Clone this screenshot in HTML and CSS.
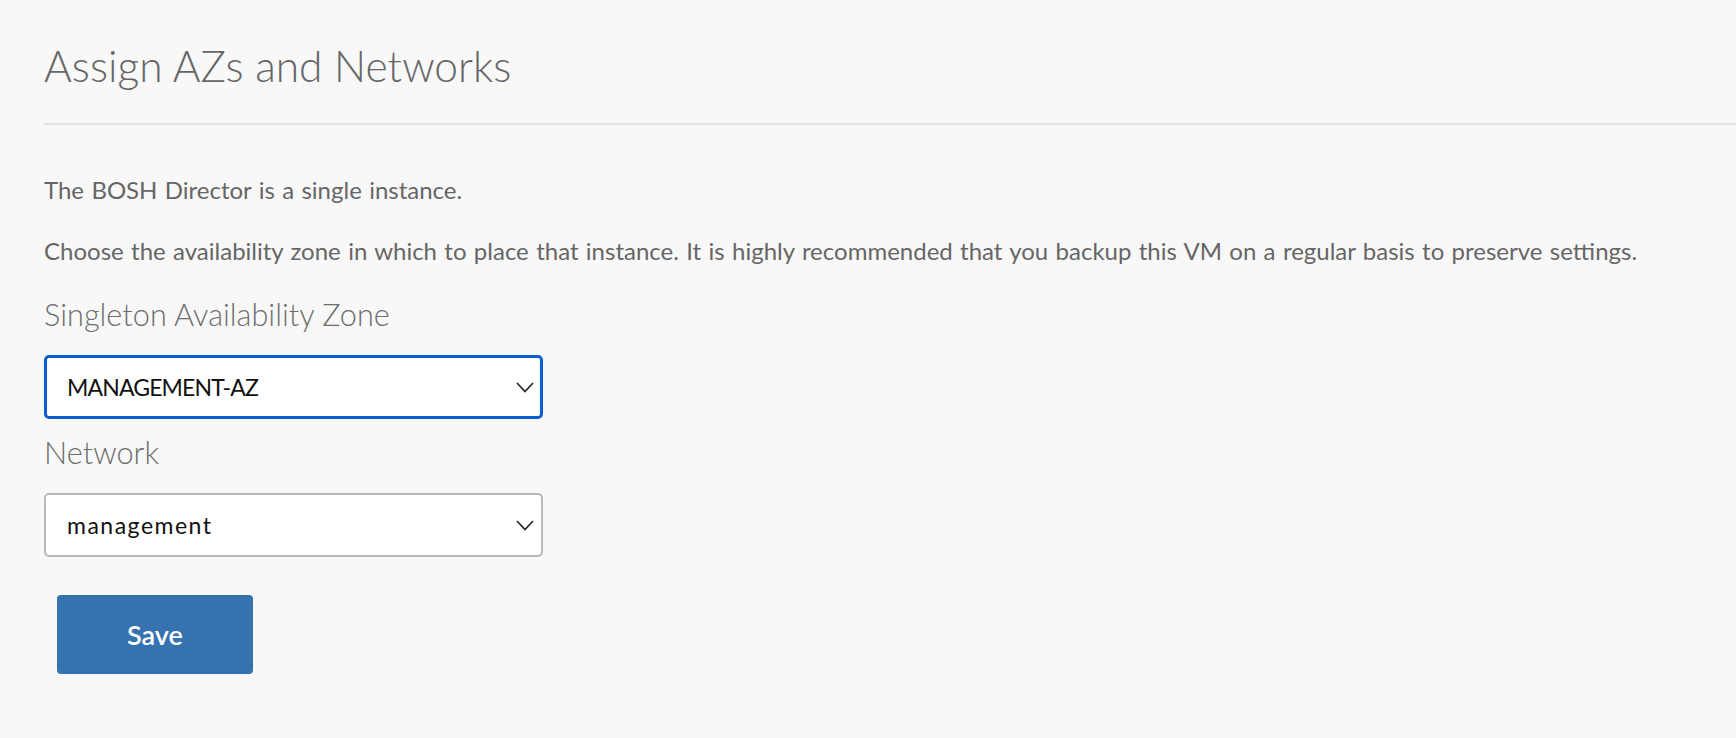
FILE: index.html
```html
<!DOCTYPE html>
<html lang="en">
<head>
<meta charset="utf-8">
<title>Assign AZs and Networks</title>
<link rel="stylesheet" href="styles.css">
</head>
<body>
<main class="page">
  <header class="page-header">
    <h1 class="title">Assign AZs and Networks</h1>
  </header>
  <section class="content">
    <p class="desc">The BOSH Director is a single instance.</p>
    <p class="desc">Choose the availability zone in which to place that instance. It is highly recommended that you backup this VM on a regular basis to preserve settings.</p>
    <div class="field">
      <label class="field-label">Singleton Availability Zone</label>
      <div class="select select-focused">
        <span class="select-value select-value-caps">MANAGEMENT-AZ</span>
        <svg class="chevron" width="18" height="11" viewBox="0 0 18 11"><path d="M1 1 L9 9.5 L17 1" fill="none" stroke="#222" stroke-width="1.6"/></svg>
      </div>
    </div>
    <div class="field">
      <label class="field-label">Network</label>
      <div class="select">
        <span class="select-value select-value-lower">management</span>
        <svg class="chevron" width="18" height="11" viewBox="0 0 18 11"><path d="M1 1 L9 9.5 L17 1" fill="none" stroke="#222" stroke-width="1.6"/></svg>
      </div>
    </div>
    <button class="btn-primary" type="button">Save</button>
  </section>
</main>
</body>
</html>
```
FILE: styles.css
```css
html, body {
  margin: 0;
  padding: 0;
}
body {
  background: #f8f8f8;
  font-family: Lato, "Liberation Sans", sans-serif;
  color: #666;
}
.page {
  padding-left: 44px;
}
.page-header {
  padding-top: 38px;
  padding-bottom: 29px;
  border-bottom: 2px solid #e3e3e3;
}
.title {
  margin: 0;
  font-size: 42.5px;
  line-height: 56px;
  font-weight: 300;
  color: #666;
}
.content {
  display: flex;
  flex-direction: column;
  align-items: flex-start;
  padding-top: 50px;
}
.desc {
  margin: 0 0 31px 0;
  font-size: 24px;
  line-height: 30px;
  word-spacing: 1.2px;
  color: #666;
}
.field {
  display: flex;
  flex-direction: column;
  align-items: flex-start;
}
.desc + .field {
  margin-top: -2px;
}
.field + .field {
  margin-top: 14px;
}
.field-label {
  font-size: 30.7px;
  line-height: 36px;
  font-weight: 300;
  color: #6e6e6e;
  padding-top: 2px;
  margin-bottom: 22px;
}
.select {
  box-sizing: border-box;
  width: 499px;
  height: 64px;
  background: #fff;
  border: 2px solid #b8b8b8;
  border-radius: 5px;
  display: flex;
  align-items: center;
  justify-content: space-between;
  padding: 0 7px 0 21px;
}
.select-focused {
  border: 3px solid #0a5fcc;
  padding-left: 20px;
  padding-right: 6px;
}
.select-value {
  font-size: 23px;
  color: #111;
}
.select-value-caps {
  letter-spacing: -0.85px;
}
.select-value-lower {
  letter-spacing: 1.5px;
}
.chevron {
  display: block;
}
.btn-primary {
  margin: 38px 0 0 13px;
  width: 196px;
  height: 79px;
  border: none;
  border-radius: 4px;
  background: #3672b0;
  color: #fff;
  font-family: Lato, "Liberation Sans", sans-serif;
  font-size: 27px;
  font-weight: 600;
}
```
